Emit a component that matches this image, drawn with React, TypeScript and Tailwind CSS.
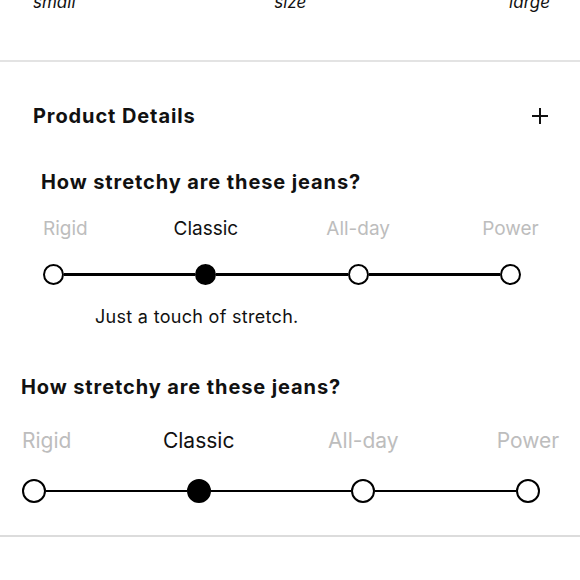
import React from 'react';

const stops = ['Rigid', 'Classic', 'All-day', 'Power'];

function StretchSlider({
  active,
  width,
  dot,
  labelSize,
}: {
  active: number;
  width: string;
  dot: string;
  labelSize: string;
}) {
  return (
    <div className={width}>
      {/* labels */}
      <div className="flex justify-between">
        {stops.map((s, i) => (
          <div key={s} className={`${dot} flex ${i === 0 ? 'justify-start' : 'justify-center'}`}>
            <span
              className={`whitespace-nowrap ${labelSize} ${i === active ? 'text-[#111]' : 'text-[#bdbdbd]'}`}
            >
              {s}
            </span>
          </div>
        ))}
      </div>
    </div>
  );
}

function Track({ active, dotClass }: { active: number; dotClass: string }) {
  return (
    <div className="flex items-center">
      {stops.map((s, i) => (
        <React.Fragment key={s}>
          <div
            className={`${dotClass} shrink-0 rounded-full border-[2.5px] border-black ${
              i === active ? 'bg-black' : 'bg-white'
            }`}
          ></div>
          {i < stops.length - 1 && <div className="flex-1 h-[2.5px] bg-black"></div>}
        </React.Fragment>
      ))}
    </div>
  );
}

export default function App() {
  return (
    <div className="w-[580px] h-[580px] bg-white overflow-hidden text-[#111] font-['Inter',sans-serif]">
      {/* size scale, cut off at top */}
      <div className="flex justify-between items-center pl-[33px] pr-[30px] h-[20px] mt-[-7px] italic text-[17px]">
        <span>small</span>
        <span className="pr-[4px]">size</span>
        <span>large</span>
      </div>

      <div className="mt-[47px] h-[2px] bg-[#e3e3e3]"></div>

      {/* Product Details header */}
      <div className="mt-[42px] h-[24px] flex items-center justify-between pl-[33px] pr-[32px]">
        <h2 className="text-[20px] font-bold tracking-[0.9px]">Product Details</h2>
        <svg width="16" height="16" viewBox="0 0 16 16">
          <path d="M8 0v16M0 8h16" stroke="#111" strokeWidth="2" />
        </svg>
      </div>

      {/* First stretch block */}
      <div className="mt-[42px] h-[24px] flex items-center pl-[41px]">
        <h3 className="text-[20px] font-bold tracking-[0.9px]">How stretchy are these jeans?</h3>
      </div>
      <div className="mt-[23px] h-[24px] flex items-center pl-[43px]">
        <StretchSlider active={1} width="w-[478px]" dot="w-[21px]" labelSize="text-[19px]" />
      </div>
      <div className="mt-[23px] h-[22px] pl-[43px] w-[521px]">
        <Track active={1} dotClass="w-[21px] h-[21px]" />
      </div>
      <div className="mt-[19px] h-[22px] flex items-center pl-[95px]">
        <p className="text-[18px] tracking-[0.3px]">Just a touch of stretch.</p>
      </div>

      {/* Second stretch block */}
      <div className="mt-[48px] h-[24px] flex items-center pl-[21px]">
        <h3 className="text-[20px] font-bold tracking-[0.9px]">How stretchy are these jeans?</h3>
      </div>
      <div className="mt-[29px] h-[26px] flex items-center pl-[22px]">
        <StretchSlider active={1} width="w-[518px]" dot="w-[24px]" labelSize="text-[21px]" />
      </div>
      <div className="mt-[25px] h-[26px] pl-[22px] w-[540px]">
        <Track active={1} dotClass="w-[24px] h-[24px]" />
      </div>

      <div className="mt-[30px] h-[2px] bg-[#dcdcdc]"></div>
    </div>
  );
}
